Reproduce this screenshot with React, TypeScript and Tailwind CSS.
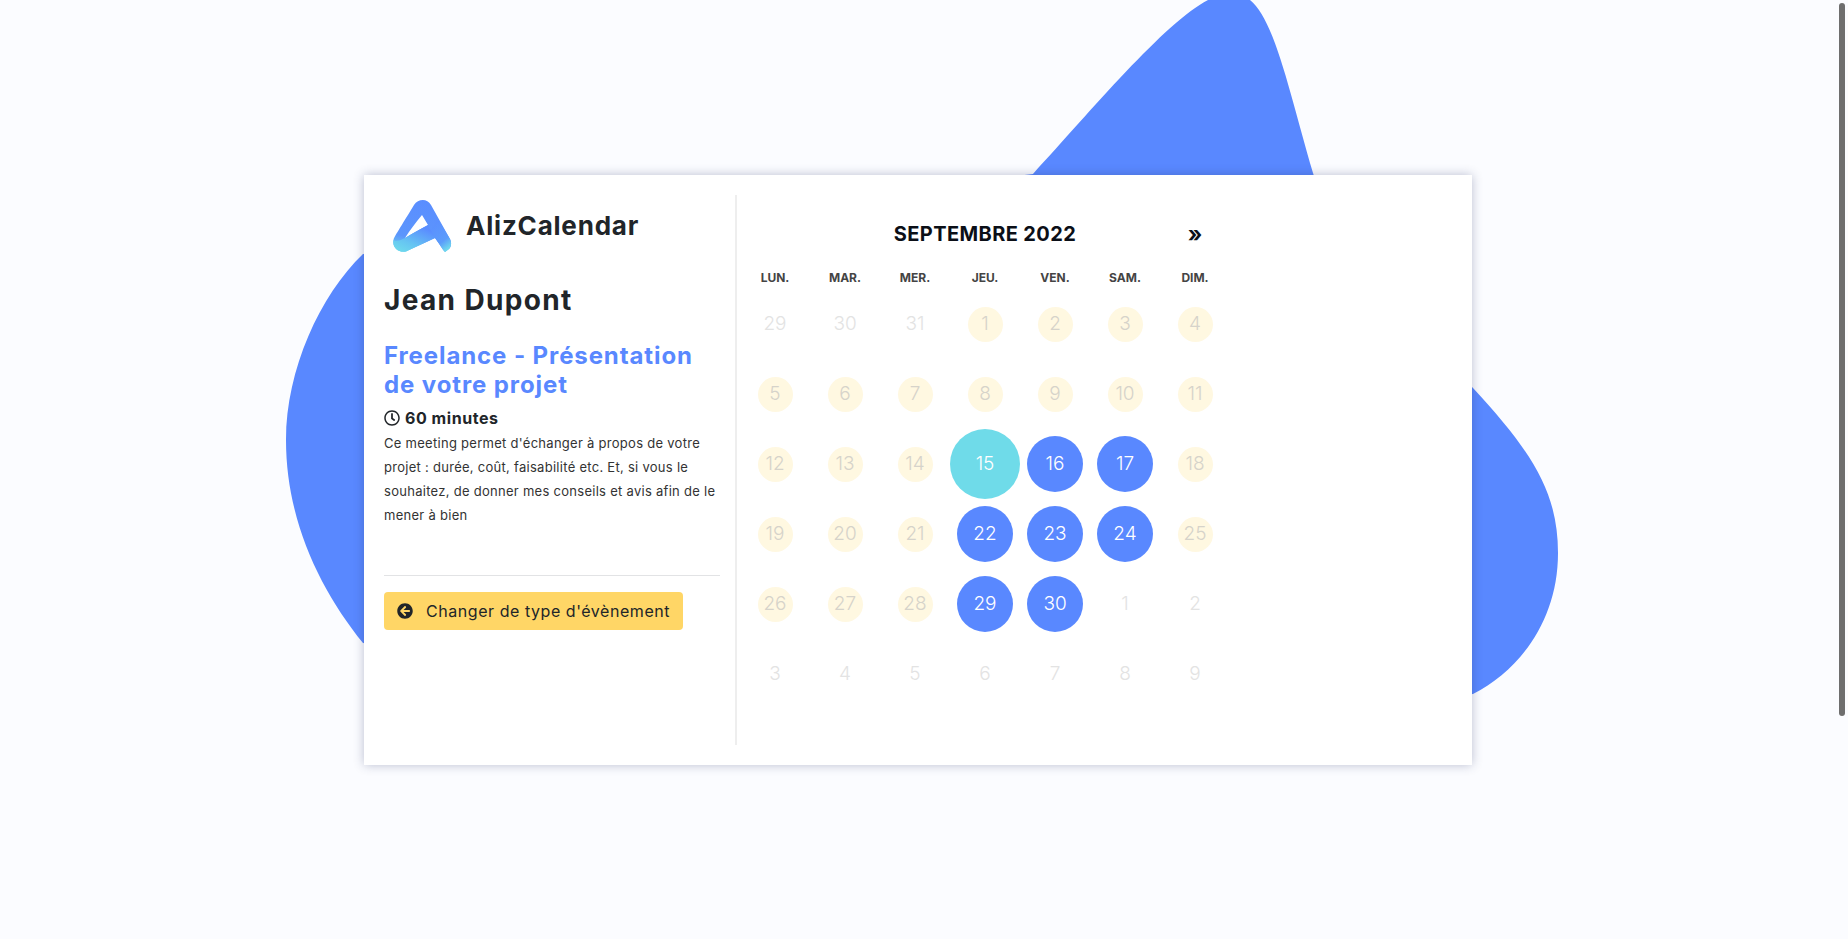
import { FaArrowCircleLeft, FaRegClock } from "react-icons/fa";

type DayKind = "off" | "closed" | "free" | "today";

const days: [number, DayKind][] = [
  [29, "off"], [30, "off"], [31, "off"], [1, "closed"], [2, "closed"], [3, "closed"], [4, "closed"],
  [5, "closed"], [6, "closed"], [7, "closed"], [8, "closed"], [9, "closed"], [10, "closed"], [11, "closed"],
  [12, "closed"], [13, "closed"], [14, "closed"], [15, "today"], [16, "free"], [17, "free"], [18, "closed"],
  [19, "closed"], [20, "closed"], [21, "closed"], [22, "free"], [23, "free"], [24, "free"], [25, "closed"],
  [26, "closed"], [27, "closed"], [28, "closed"], [29, "free"], [30, "free"], [1, "off"], [2, "off"],
  [3, "off"], [4, "off"], [5, "off"], [6, "off"], [7, "off"], [8, "off"], [9, "off"],
];

const weekDays = ["Lun.", "Mar.", "Mer.", "Jeu.", "Ven.", "Sam.", "Dim."];

const Logo = () => (
  <svg width="60" height="56" viewBox="0 0 60 56" className="shrink-0">
    <defs>
      <linearGradient id="logoMain" x1="0.6" y1="0" x2="0.35" y2="1">
        <stop offset="0" stopColor="#5a8dff" />
        <stop offset="0.75" stopColor="#5c96fc" />
        <stop offset="1" stopColor="#6bcff0" />
      </linearGradient>
      <linearGradient id="logoFoot" x1="0.2" y1="0" x2="0.7" y2="1">
        <stop offset="0" stopColor="#5a8dff" />
        <stop offset="0.7" stopColor="#5c9cfb" />
        <stop offset="1" stopColor="#6fdcec" />
      </linearGradient>
      <linearGradient id="logoBand" x1="0.1" y1="1" x2="0.7" y2="0.1">
        <stop offset="0" stopColor="#6fdcec" />
        <stop offset="0.4" stopColor="#66c4f2" />
        <stop offset="1" stopColor="#5a8dff" />
      </linearGradient>
    </defs>
    <path
      fillRule="evenodd"
      fill="url(#logoMain)"
      d="M22 6C26 0 35-1 39 6L58 40C60 44 59 48 57 50L53 53C50 50 47 44 43 39C32 44 22 49 14 52.5C6 54 0 48 1.5 41C2 38 5 34 22 6ZM30 16C24 23 18 31 13 39C20 35 28 30 36 26Z"
    />
    <path fill="url(#logoFoot)" d="M46 20L58 40C60 44 59 48 57 50L53 53C50 50 47 44 43 39L38 33Z" />
    <path fill="url(#logoBand)" d="M13 39C20 35 28 30 36 26C38 30 41 35 43 39C32 44 22 49 14 52.5C6 54 0 48 1.5 41C5 43 9 41 13 39Z" />
  </svg>
);

const Day = ({ value, kind }: { value: number; kind: DayKind }) => {
  if (kind === "off") {
    return (
      <div className="h-[70px] flex items-center justify-center text-[19px] font-light text-[#e3e3e3]">{value}</div>
    );
  }
  if (kind === "closed") {
    return (
      <div className="h-[70px] flex items-center justify-center">
        <div className="w-[35px] h-[35px] rounded-full bg-[#fff8e1] flex items-center justify-center text-[19px] font-light text-[#d6d3ca]">
          {value}
        </div>
      </div>
    );
  }
  if (kind === "today") {
    return (
      <div className="h-[70px] flex items-center justify-center">
        <div className="w-[70px] h-[70px] rounded-full bg-[#6fdbe9] flex items-center justify-center text-[19px] font-light text-white">
          {value}
        </div>
      </div>
    );
  }
  return (
    <div className="h-[70px] flex items-center justify-center">
      <div className="w-[56px] h-[56px] rounded-full bg-[#5988ff] flex items-center justify-center text-[19px] font-light text-white">
        {value}
      </div>
    </div>
  );
};

export default function App() {
  return (
    <div className="relative h-screen overflow-hidden bg-[#fbfcff] font-['Inter',sans-serif] text-[#212529]">
      <svg className="absolute inset-0" width="1848" height="939" viewBox="0 0 1848 939">
        <path
          fill="#5988ff"
          d="M1033 174C1090 112 1165 22 1208 0C1225-8 1240-8 1250 0C1275 20 1290 95 1313 173C1340 260 1420 330 1473 388C1530 450 1558 490 1558 553C1558 620 1520 670 1473 694L1000 740L363 643C320 590 286 520 286 440C286 370 320 295 363 254Z"
        />
      </svg>

      {/* scrollbar thumb */}
      <div className="absolute right-[3px] top-[3px] w-[6px] h-[713px] rounded-[3px] bg-[#6e6e6e]" />

      <div className="relative pr-[12px] pt-[175px] flex justify-center">
        <div className="w-[1108px] h-[590px] bg-white flex py-[20px] pl-[20px] shadow-[0_0_10px_rgba(40,50,100,0.3)]">
          <div className="w-[336px] shrink-0">
            <div className="flex items-center h-[60px] pl-[8px]">
              <div className="pt-[4px]">
                <Logo />
              </div>
              <span className="ml-[14px] text-[26px] font-bold tracking-[0.8px]">AlizCalendar</span>
            </div>
            <h1 className="mt-[27px] text-[28px] leading-[36px] font-bold tracking-[1.35px]">Jean Dupont</h1>
            <h2 className="mt-[23px] text-[24px] leading-[29px] font-bold tracking-[0.9px] text-[#5988ff]">
              Freelance - Présentation de votre projet
            </h2>
            <div className="mt-[7px] flex items-center gap-[5px] text-[16px] leading-[24px] font-bold">
              <FaRegClock className="w-[16px] h-[16px]" />
              <span className="tracking-[0.55px]">60 minutes</span>
            </div>
            <p className="mt-[1px] text-[13px] leading-[24px] tracking-[0.28px] text-[#333]">
              Ce meeting permet d'échanger à propos de votre projet : durée, coût, faisabilité etc. Et, si vous le
              souhaitez, de donner mes conseils et avis afin de le mener à bien
            </p>
            <div className="mt-[48px] border-t border-[#e2e3e5]" />
            <div className="mt-[16px] w-[299px] h-[38px] rounded-[4px] bg-[#ffd666] flex items-center pl-[13px] gap-[13px] text-[16px] tracking-[0.55px]">
              <FaArrowCircleLeft className="w-[16px] h-[16px]" />
              <span>Changer de type d'évènement</span>
            </div>
          </div>

          <div className="ml-[15px] border-l-2 border-[#eeeeee] pl-[3px] h-[550px]">
            <div className="w-[490px]">
              <div className="mt-[17px] grid grid-cols-7 h-[44px] items-center">
                <div className="col-start-2 col-span-5 text-center text-[20px] font-bold tracking-[0.4px] text-[#0b0f17] uppercase">
                  Septembre 2022
                </div>
                <div className="text-center text-[22px] font-bold text-[#0b0f17]">»</div>
              </div>
              <div className="mt-[13px] pb-[2px] grid grid-cols-7 h-[20px] items-center text-center text-[12px] font-bold uppercase text-[#444]">
                {weekDays.map((d) => (
                  <div key={d}>{d}</div>
                ))}
              </div>
              <div className="grid grid-cols-7">
                {days.map(([value, kind], i) => (
                  <Day key={i} value={value} kind={kind} />
                ))}
              </div>
            </div>
          </div>
        </div>
      </div>
    </div>
  );
}
